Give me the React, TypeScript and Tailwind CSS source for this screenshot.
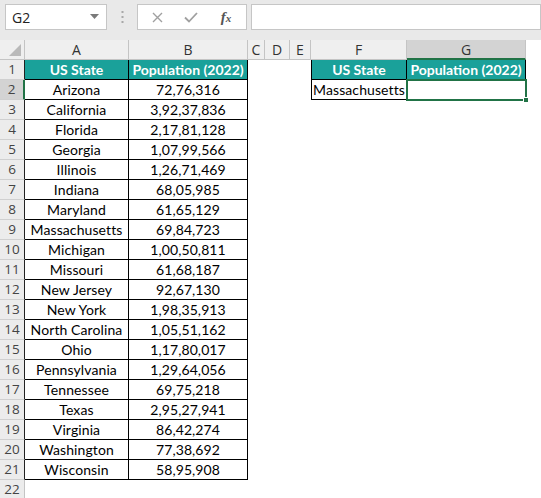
import React from "react";

const data: [string, string][] = [
  ["Arizona", "72,76,316"],
  ["California", "3,92,37,836"],
  ["Florida", "2,17,81,128"],
  ["Georgia", "1,07,99,566"],
  ["Illinois", "1,26,71,469"],
  ["Indiana", "68,05,985"],
  ["Maryland", "61,65,129"],
  ["Massachusetts", "69,84,723"],
  ["Michigan", "1,00,50,811"],
  ["Missouri", "61,68,187"],
  ["New Jersey", "92,67,130"],
  ["New York", "1,98,35,913"],
  ["North Carolina", "1,05,51,162"],
  ["Ohio", "1,17,80,017"],
  ["Pennsylvania", "1,29,64,056"],
  ["Tennessee", "69,75,218"],
  ["Texas", "2,95,27,941"],
  ["Virginia", "86,42,274"],
  ["Washington", "77,38,692"],
  ["Wisconsin", "58,95,908"],
];

const TEAL = "bg-[#1aa19a]";

function ColHeader({ label, w, selected }: { label: string; w: string; selected?: boolean }) {
  return (
    <div
      className={`${w} h-full flex items-center justify-center border-r border-[#c4c4c4] text-[14px] text-[#333] font-['Open_Sans',sans-serif] ${
        selected ? "bg-[#d3d3d3] border-b-2 border-b-[#217346]" : "bg-[#efefef] border-b border-b-[#c4c4c4]"
      }`}
    >
      {label}
    </div>
  );
}

function Row({ r }: { r: number }) {
  const inT1 = r >= 1 && r <= 21;
  const inT2 = r === 1 || r === 2;
  const d = r >= 2 && r <= 21 ? data[r - 2] : null;
  const hdrSel = r === 2;
  const cellText = "text-[14px] text-black tracking-[0.1px]";
  const bold = `${TEAL} text-white font-bold text-[14px]`;
  return (
    <div className="flex h-[20px]">
      <div
        className={`w-[25px] shrink-0 h-full flex items-center justify-center text-[13.5px] text-[#444] font-['Open_Sans',sans-serif] border-b border-b-[#d0d0d0] ${
          hdrSel
            ? "bg-[#d3d3d3] border-r-2 border-r-[#217346]"
            : inT1
            ? "bg-[#ececec] border-r border-r-[#222]"
            : "bg-[#ececec] border-r border-r-[#c4c4c4]"
        }`}
      >
        {r}
      </div>
      {/* A */}
      <div
        className={`w-[104px] shrink-0 h-full flex items-center justify-center whitespace-nowrap ${
          r === 1
            ? `${bold} border-r border-b border-black`
            : inT1
            ? `${cellText} border-r border-b border-black`
            : ""
        }`}
      >
        {r === 1 ? "US State" : d ? d[0] : ""}
      </div>
      {/* B */}
      <div
        className={`w-[119px] shrink-0 h-full flex items-center justify-center whitespace-nowrap ${
          r === 1
            ? `${bold} border-r border-b border-black`
            : inT1
            ? `${cellText} border-r border-b border-black`
            : ""
        }`}
      >
        {r === 1 ? "Population (2022)" : d ? d[1] : ""}
      </div>
      <div className="w-[17px] shrink-0" />
      <div className="w-[25px] shrink-0" />
      <div className="w-[21px] shrink-0" />
      {/* F */}
      <div
        className={`w-[96px] shrink-0 h-full flex items-center justify-center whitespace-nowrap ${
          r === 1
            ? `${bold} border-l border-r border-b border-black`
            : inT2
            ? `${cellText} border-l border-r border-b border-black`
            : ""
        }`}
      >
        {r === 1 ? "US State" : r === 2 ? "Massachusetts" : ""}
      </div>
      {/* G */}
      <div
        className={`relative w-[119px] shrink-0 h-full flex items-center justify-center whitespace-nowrap ${
          r === 1 ? `${bold} border-r border-b border-black` : r === 2 ? `${cellText}` : ""
        }`}
      >
        {r === 1 ? "Population (2022)" : ""}
        {r === 2 && (
          <>
            <div className="absolute -left-[1px] -top-[1px] -right-[1px] -bottom-[1px] border-2 border-[#217346]" />
            <div className="absolute -right-[3px] -bottom-[3px] w-[6px] h-[6px] bg-[#217346] border border-white" />
          </>
        )}
      </div>
      <div className="flex-1" />
    </div>
  );
}

export default function App() {
  return (
    <div className="w-[541px] h-[498px] overflow-hidden bg-white font-['Lato',sans-serif]">
      {/* Formula bar */}
      <div className="h-[40px] bg-[#e9e9e9] flex items-start pt-[4px] pl-[5px]">
        <div className="w-[102px] h-[26px] bg-white border border-[#c6c6c6] flex items-center justify-between pl-[6px] pr-[7px]">
          <span className="text-[14px] text-[#222] font-['Open_Sans',sans-serif]">G2</span>
          <svg width="9" height="6" viewBox="0 0 9 6">
            <path d="M0 0 L9 0 L4.5 5 Z" fill="#7a7a7a" />
          </svg>
        </div>
        <div className="w-[30px] h-[26px] flex items-center justify-center">
          <svg width="3" height="12" viewBox="0 0 3 12">
            <rect x="0.5" y="0" width="2" height="2" fill="#a8a8a8" />
            <rect x="0.5" y="5" width="2" height="2" fill="#a8a8a8" />
            <rect x="0.5" y="10" width="2" height="2" fill="#a8a8a8" />
          </svg>
        </div>
        <div className="w-[110px] h-[26px] bg-white border border-[#c6c6c6] flex items-center">
          <div className="w-[38px] flex justify-center">
            <svg width="11" height="11" viewBox="0 0 11 11">
              <path d="M1 1 L10 10 M10 1 L1 10" stroke="#a0a0a0" strokeWidth="1.4" />
            </svg>
          </div>
          <div className="w-[30px] flex justify-center">
            <svg width="14" height="11" viewBox="0 0 14 11">
              <path d="M1 5.5 L5 9.5 L13 1" stroke="#a0a0a0" strokeWidth="1.8" fill="none" />
            </svg>
          </div>
          <div className="flex-1 flex justify-center">
            <span className="text-[15px] italic font-semibold text-[#555] font-['Liberation_Serif',serif]">
              f<span className="text-[11px]">x</span>
            </span>
          </div>
        </div>
        <div className="ml-[4px] flex-1 h-[26px] bg-white border border-[#c6c6c6]" />
      </div>
      {/* Column headers */}
      <div className="flex h-[20px]">
        <div className="w-[25px] shrink-0 h-full bg-[#efefef] border-r border-b border-[#c4c4c4] flex items-end justify-end pr-[3px] pb-[3px]">
          <svg width="12" height="12" viewBox="0 0 12 12">
            <path d="M12 0 L12 12 L0 12 Z" fill="#b9b9b9" />
          </svg>
        </div>
        <ColHeader label="A" w="w-[104px]" />
        <ColHeader label="B" w="w-[119px]" />
        <ColHeader label="C" w="w-[17px]" />
        <ColHeader label="D" w="w-[25px]" />
        <ColHeader label="E" w="w-[21px]" />
        <ColHeader label="F" w="w-[96px]" />
        <ColHeader label="G" w="w-[119px]" selected />
        <div className="flex-1 h-full bg-white" />
      </div>
      {Array.from({ length: 22 }, (_, i) => (
        <Row key={i} r={i + 1} />
      ))}
    </div>
  );
}
